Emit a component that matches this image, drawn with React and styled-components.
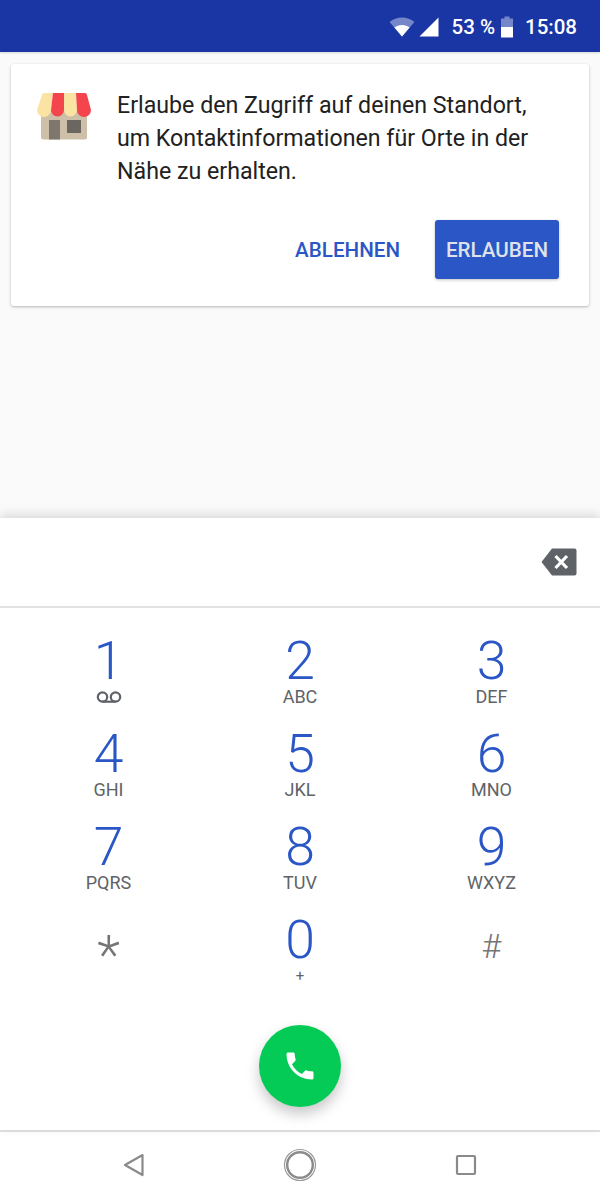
import React from 'react'
import styled, { createGlobalStyle } from 'styled-components'

const GlobalStyle = createGlobalStyle`
  html, body {
    margin: 0;
    padding: 0;
    background: #ffffff;
    font-family: Roboto, "Liberation Sans", sans-serif;
  }
`

const keys = [
  { digit: '1', voicemail: true },
  { digit: '2', letters: 'ABC' },
  { digit: '3', letters: 'DEF' },
  { digit: '4', letters: 'GHI' },
  { digit: '5', letters: 'JKL' },
  { digit: '6', letters: 'MNO' },
  { digit: '7', letters: 'PQRS' },
  { digit: '8', letters: 'TUV' },
  { digit: '9', letters: 'WXYZ' },
  { digit: '*', symbol: 'star' },
  { digit: '0', letters: '+', small: true },
  { digit: '#', symbol: 'hash' },
]

function WifiIcon() {
  return (
    <svg width="26" height="20" viewBox="0 0 26 20">
      <path d="M13 19.500 0.600 5C4 2.200 8.300 0.500 13 0.500s9 1.700 12.400 4.500z" fill="#ffffff" fillOpacity="0.4" />
      <path d="M13 19.500 5.400 10.600C7.500 9 10.100 8 13 8s5.500 1 7.600 2.600z" fill="#ffffff" />
    </svg>
  )
}

function SignalIcon() {
  return (
    <svg width="20" height="20" viewBox="0 0 20 20">
      <path d="M0.500 19.500 19.500 0.500V19.500z" fill="#ffffff" />
    </svg>
  )
}

function BatteryIcon() {
  return (
    <svg width="14" height="22" viewBox="0 0 14 22">
      <path d="M4.500 0.500h5v2h3.500v8.500H1V2.500h3.500z" fill="#ffffff" fillOpacity="0.4" />
      <path d="M1 11h12v10.500H1z" fill="#ffffff" />
    </svg>
  )
}

function StoreIcon() {
  return (
    <svg width="54" height="47" viewBox="0 0 54 47">
      <path d="M4 17h46v27a2.500 2.500 0 0 1-2.500 2.500h-41A2.500 2.500 0 0 1 4 44z" fill="#cdbfa8" />
      <path d="M12 27h11v19.500H12z" fill="#7d776e" />
      <path d="M30 27h14v13H30z" fill="#6b6660" />
      <path d="M5 2q.3-2 2-2h9L14 17a7 7 0 0 1-14 0z" fill="#fbe3a3" />
      <path d="M16 0h11v17a6.500 6.500 0 0 1-13 0z" fill="#f4454c" />
      <path d="M27 0h12l1 17a6.500 6.500 0 0 1-13 0z" fill="#fbe3a3" />
      <path d="M39 0h9q1.700 0 2 2l4 15a7 7 0 0 1-14 0z" fill="#f4454c" />
    </svg>
  )
}

function BackspaceIcon() {
  return (
    <svg width="36" height="28" viewBox="0 0 36 28">
      <path d="M11 0.500h22.500a2 2 0 0 1 2 2v23a2 2 0 0 1-2 2H11L0.500 14z" fill="#5f6368" />
      <path d="M14.500 8 26 20M26 8 14.500 20" stroke="#ffffff" strokeWidth="3.200" fill="none" />
    </svg>
  )
}

function VoicemailIcon() {
  return (
    <svg width="28" height="14" viewBox="0 0 28 14">
      <circle cx="7.500" cy="7" r="4.700" fill="none" stroke="#5f6368" strokeWidth="2.200" />
      <circle cx="20.500" cy="7" r="4.700" fill="none" stroke="#5f6368" strokeWidth="2.200" />
      <path d="M7.500 11.700h13" stroke="#5f6368" strokeWidth="2.200" />
    </svg>
  )
}

function PhoneIcon() {
  return (
    <svg width="36" height="36" viewBox="0 0 24 24">
      <path d="M6.620 10.790c1.440 2.830 3.760 5.140 6.590 6.590l2.200-2.200c.27-.27.67-.36 1.020-.24 1.120.37 2.330.57 3.570.57.550 0 1 .45 1 1V20c0 .55-.45 1-1 1-9.390 0-17-7.610-17-17 0-.55.450-1 1-1h3.500c.55 0 1 .45 1 1 0 1.250.2 2.450.57 3.570.11.350.03.740-.25 1.020l-2.200 2.200z" fill="#ffffff" />
    </svg>
  )
}

function BackIcon() {
  return (
    <svg width="22" height="24" viewBox="0 0 22 24">
      <path d="M19.500 2 2 12l17.500 10z" fill="none" stroke="#8a8a8a" strokeWidth="2.200" strokeLinejoin="round" />
    </svg>
  )
}

function HomeIcon() {
  return (
    <svg width="34" height="34" viewBox="0 0 34 34">
      <circle cx="17" cy="17" r="15.500" fill="none" stroke="#9a9a9a" strokeWidth="1.200" />
      <circle cx="17" cy="17" r="12.800" fill="none" stroke="#8a8a8a" strokeWidth="2.400" />
    </svg>
  )
}

function RecentIcon() {
  return (
    <svg width="22" height="22" viewBox="0 0 22 22">
      <rect x="2" y="2" width="18" height="18" rx="1" fill="none" stroke="#8a8a8a" strokeWidth="2.200" />
    </svg>
  )
}

function App() {
  return (
    <>
      <GlobalStyle />
      <Page>
        <StatusBar>
          <WifiIcon />
          <SignalIcon />
          <BatteryText>53 %</BatteryText>
          <BatteryIcon />
          <Clock>15:08</Clock>
        </StatusBar>
        <Content>
          <Card>
            <Message>
              <StoreIcon />
              <MessageText>
                Erlaube den Zugriff auf deinen Standort,
                <br />
                um Kontaktinformationen für Orte in der
                <br />
                Nähe zu erhalten.
              </MessageText>
            </Message>
            <Actions>
              <TextButton>ABLEHNEN</TextButton>
              <FilledButton>ERLAUBEN</FilledButton>
            </Actions>
          </Card>
        </Content>
        <Dialer>
          <InputRow>
            <BackspaceIcon />
          </InputRow>
          <Keypad>
            {keys.map((key) => (
              <Key key={key.digit}>
                <Digit $symbol={key.symbol}>{key.digit}</Digit>
                {key.voicemail && <VoicemailSlot><VoicemailIcon /></VoicemailSlot>}
                {key.letters && <Letters $small={key.small}>{key.letters}</Letters>}
              </Key>
            ))}
          </Keypad>
          <CallRow>
            <CallButton>
              <PhoneIcon />
            </CallButton>
          </CallRow>
        </Dialer>
        <NavBar>
          <BackIcon />
          <HomeIcon />
          <RecentIcon />
        </NavBar>
      </Page>
    </>
  )
}

const Page = styled.div`
  display: flex;
  flex-direction: column;
  width: 600px;
  height: 1200px;
  overflow: hidden;
  background: #ffffff;
`

const StatusBar = styled.div`
  position: relative;
  z-index: 2;
  display: flex;
  align-items: center;
  justify-content: flex-end;
  flex: 0 0 52px;
  box-sizing: border-box;
  padding: 2px 23px 0 0;
  background: #1a36a5;
  box-shadow: 0 1px 2px rgba(0, 0, 0, 0.15);
  color: #ffffff;
  font-size: 20.500px;
  font-weight: 500;
  svg:nth-child(2) {
    margin-left: 4px;
  }
`

const BatteryText = styled.span`
  margin: 0 5px 0 12px;
`

const Clock = styled.span`
  margin-left: 11px;
`

const Content = styled.div`
  flex: 1;
  padding: 12px 11px 0;
  background: #fafafa;
`

const Card = styled.div`
  display: flex;
  flex-direction: column;
  height: 242px;
  box-sizing: border-box;
  padding: 25px 30px 0 26px;
  border-radius: 3px;
  background: #ffffff;
  box-shadow: 0 1px 3px rgba(0, 0, 0, 0.28);
`

const Message = styled.div`
  display: flex;
  align-items: flex-start;
  gap: 26px;
  svg {
    flex: none;
    margin-top: 4px;
  }
`

const MessageText = styled.p`
  margin: 0;
  color: #212121;
  font-size: 23.200px;
  line-height: 33px;
  white-space: nowrap;
`

const Actions = styled.div`
  display: flex;
  align-items: center;
  justify-content: flex-end;
  gap: 35px;
  margin-top: 32px;
`

const TextButton = styled.span`
  color: #2a56c6;
  font-size: 20.600px;
  font-weight: 500;
`

const FilledButton = styled.span`
  display: flex;
  align-items: center;
  justify-content: center;
  width: 124px;
  height: 59px;
  border-radius: 3px;
  background: #2a56c6;
  box-shadow: 0 1px 3px rgba(0, 0, 0, 0.25);
  color: #dfe2e8;
  font-size: 20.600px;
  font-weight: 500;
`

const Dialer = styled.div`
  position: relative;
  flex: 0 0 auto;
  background: #ffffff;
  box-shadow: 0 -3px 10px rgba(0, 0, 0, 0.14);
`

const InputRow = styled.div`
  display: flex;
  align-items: center;
  justify-content: flex-end;
  height: 90px;
  box-sizing: border-box;
  padding: 0 23px 0 0;
  border-bottom: 2px solid #e2e2e2;
`

const Keypad = styled.div`
  display: grid;
  grid-template-columns: repeat(3, 191.500px);
  grid-auto-rows: 93px;
  justify-content: center;
  padding-top: 27px;
`

const Key = styled.div`
  display: flex;
  flex-direction: column;
  align-items: center;
`

const Digit = styled.span`
  margin-top: ${(p) => (p.$symbol === 'star' ? '15px' : p.$symbol === 'hash' ? '6px' : '0')};
  color: ${(p) => (p.$symbol ? '#757575' : '#2a56c6')};
  font-size: ${(p) => (p.$symbol === 'hash' ? '34px' : '53.500px')};
  font-weight: 300;
  line-height: 52px;
`

const Letters = styled.span`
  color: #5f6368;
  font-size: ${(p) => (p.$small ? '15px' : '18px')};
  line-height: 20px;
`

const VoicemailSlot = styled.span`
  display: flex;
  height: 20px;
  align-items: center;
`

const CallRow = styled.div`
  display: flex;
  justify-content: center;
  padding: 18px 0 23px;
`

const CallButton = styled.div`
  display: flex;
  align-items: center;
  justify-content: center;
  width: 82px;
  height: 82px;
  border-radius: 50%;
  background: #04cb55;
  box-shadow: 0 7px 14px rgba(0, 0, 0, 0.22);
`

const NavBar = styled.div`
  display: grid;
  grid-template-columns: repeat(3, 166px);
  justify-content: center;
  justify-items: center;
  align-items: center;
  flex: 0 0 70px;
  box-sizing: border-box;
  padding: 0 0 2px 0;
  border-top: 2px solid #e2e2e2;
`

export default App
